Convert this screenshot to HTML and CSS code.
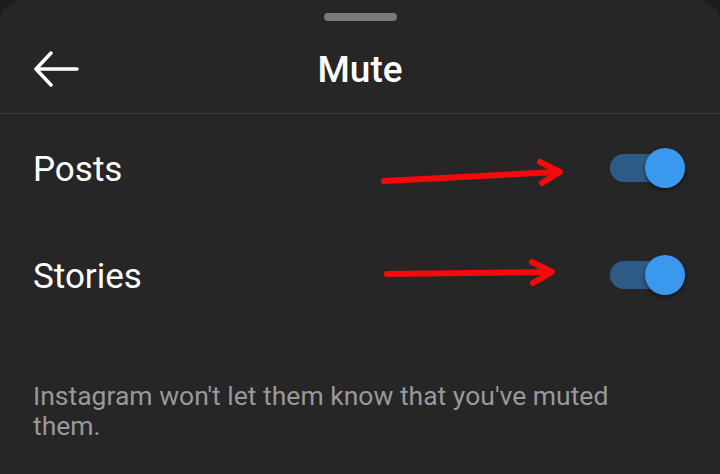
FILE: index.html
```html
<html>
  <head>
    <title>Mute</title>
    <link rel="stylesheet" href="styles.css">
  </head>
  <body>
    <div class="sheet">
      <div class="handle"></div>
      <div class="header">
        <svg class="back" width="46" height="36" viewBox="0 0 46 36">
          <path d="M3 18 H44 M18 2 L3 18 L18 34" fill="none" stroke="#fff" stroke-width="3.5" stroke-linecap="round" stroke-linejoin="round"/>
        </svg>
        <div class="title">Mute</div>
        <div></div>
      </div>

      <div class="row">
        <span class="label">Posts</span>
        <div class="toggle"><div class="track"></div><div class="thumb"></div></div>
      </div>
      <div class="row">
        <span class="label">Stories</span>
        <div class="toggle"><div class="track"></div><div class="thumb"></div></div>
      </div>

      <p class="note">Instagram won't let them know that you've muted them.</p>

      <!-- red arrows drawn on top of the screenshot -->
      <svg class="marks" width="720" height="474" viewBox="0 0 720 474">
        <g fill="none" stroke="#f40a0a" stroke-width="6" stroke-linecap="round" stroke-linejoin="round">
          <path d="M384 181 L557 172"/>
          <path d="M540 162 L560 172 L542 183"/>
          <path d="M387 274 L550 272"/>
          <path d="M532 262 L552 272 L533 283"/>
        </g>
      </svg>
    </div>
  </body>
</html>
```

FILE: styles.css
```css
body {
  margin: 0;
  background-color: #1c1c1c;
  font-family: Roboto, "Noto Sans", sans-serif;
}
.sheet {
  position: relative;
  height: 474px;
  background-color: #262626;
  border-radius: 22px 22px 0 0;
  overflow: hidden;
}
.handle {
  width: 73px;
  height: 8px;
  margin: 13px auto 0;
  background-color: #7a7a7a;
  border-radius: 4px;
}
.header {
  display: grid;
  grid-template-columns: 1fr auto 1fr;
  align-items: center;
  height: 92px;
  padding: 0 33px;
  border-bottom: 1px solid #3a3a3a;
}
.back {
  display: block;
  margin-top: 4px;
}
.title {
  color: #fff;
  font-size: 37px;
  font-weight: 500;
  margin-top: 4px;
}
.row {
  display: flex;
  align-items: center;
  justify-content: space-between;
  height: 107px;
  padding: 0 35px 0 33px;
}
.label {
  color: #fff;
  font-size: 35px;
  margin-top: 3px;
}
.toggle {
  position: relative;
  width: 75px;
  height: 40px;
}
.track {
  position: absolute;
  left: 0;
  top: 6px;
  width: 60px;
  height: 28px;
  border-radius: 14px;
  background-color: #2d5b88;
}
.thumb {
  position: absolute;
  right: 0;
  top: 0;
  width: 40px;
  height: 40px;
  border-radius: 50%;
  background-color: #3a98ef;
  box-shadow: 0 2px 4px rgba(0, 0, 0, 0.5);
}
.note {
  margin: 53px 0 0;
  padding: 0 60px 0 33px;
  color: #999;
  font-size: 26.5px;
  line-height: 30px;
}
.marks {
  position: absolute;
  left: 0;
  top: 0;
}
```
